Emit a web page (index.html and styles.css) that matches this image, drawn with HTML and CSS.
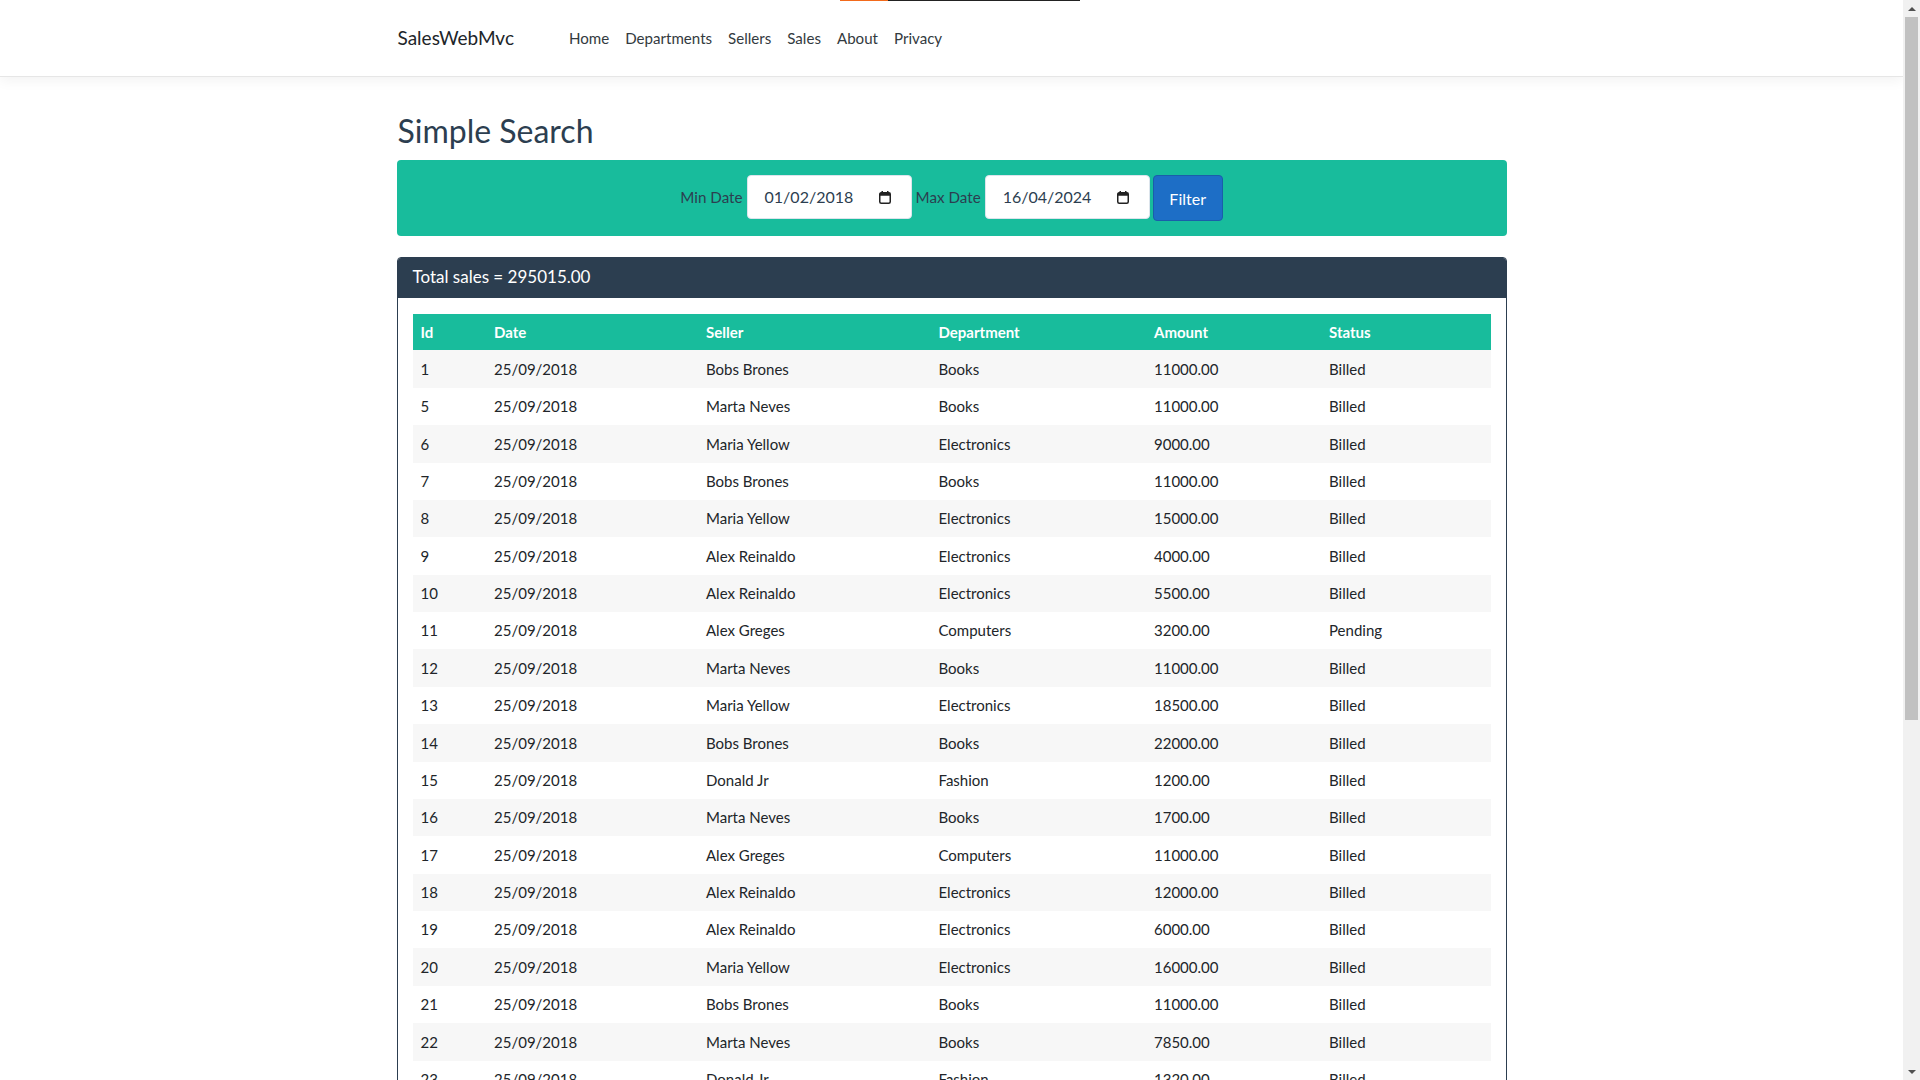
FILE: index.html
```html
<!DOCTYPE html>
<html lang="en">
<head>
<meta charset="utf-8">
<title>Simple Search - SalesWebMvc</title>
<link rel="stylesheet" href="styles.css">
</head>
<body>
<div class="page">
  <div class="loadbar"><span class="load-orange"></span><span class="load-dark"></span></div>
  <header class="navbar">
    <div class="container nav-inner">
      <a class="brand" href="#">SalesWebMvc</a>
      <ul class="nav">
        <li><a href="#">Home</a></li>
        <li><a href="#">Departments</a></li>
        <li><a href="#">Sellers</a></li>
        <li><a href="#">Sales</a></li>
        <li><a href="#">About</a></li>
        <li><a href="#">Privacy</a></li>
      </ul>
    </div>
  </header>

  <main class="container">
    <h2 class="title">Simple Search</h2>
    <form class="filter">
      <label class="flabel">Min Date</label>
      <span class="date-input"><span class="date-text">01/02/2018</span>
        <svg class="cal" width="12" height="13" viewBox="0 0 12 13"><rect x="0.75" y="1.75" width="10.5" height="10.5" rx="1.5" fill="none" stroke="#222" stroke-width="1.5"/><rect x="0.75" y="1.75" width="10.5" height="3" fill="#222"/><rect x="2.5" y="0" width="1.5" height="2.5" fill="#222"/><rect x="8" y="0" width="1.5" height="2.5" fill="#222"/></svg>
      </span>
      <label class="flabel">Max Date</label>
      <span class="date-input"><span class="date-text">16/04/2024</span>
        <svg class="cal" width="12" height="13" viewBox="0 0 12 13"><rect x="0.75" y="1.75" width="10.5" height="10.5" rx="1.5" fill="none" stroke="#222" stroke-width="1.5"/><rect x="0.75" y="1.75" width="10.5" height="3" fill="#222"/><rect x="2.5" y="0" width="1.5" height="2.5" fill="#222"/><rect x="8" y="0" width="1.5" height="2.5" fill="#222"/></svg>
      </span>
      <button class="btn-filter" type="button">Filter</button>
    </form>

    <div class="card">
      <div class="card-header">Total sales = 295015.00</div>
      <div class="card-body">
        <table class="sales">
          <colgroup>
            <col class="c-id"><col class="c-date"><col class="c-seller"><col class="c-dept"><col class="c-amount"><col class="c-status">
          </colgroup>
          <thead>
            <tr><th>Id</th><th>Date</th><th>Seller</th><th>Department</th><th>Amount</th><th>Status</th></tr>
          </thead>
          <tbody>
            <tr><td>1</td><td>25/09/2018</td><td>Bobs Brones</td><td>Books</td><td>11000.00</td><td>Billed</td></tr>
            <tr><td>5</td><td>25/09/2018</td><td>Marta Neves</td><td>Books</td><td>11000.00</td><td>Billed</td></tr>
            <tr><td>6</td><td>25/09/2018</td><td>Maria Yellow</td><td>Electronics</td><td>9000.00</td><td>Billed</td></tr>
            <tr><td>7</td><td>25/09/2018</td><td>Bobs Brones</td><td>Books</td><td>11000.00</td><td>Billed</td></tr>
            <tr><td>8</td><td>25/09/2018</td><td>Maria Yellow</td><td>Electronics</td><td>15000.00</td><td>Billed</td></tr>
            <tr><td>9</td><td>25/09/2018</td><td>Alex Reinaldo</td><td>Electronics</td><td>4000.00</td><td>Billed</td></tr>
            <tr><td>10</td><td>25/09/2018</td><td>Alex Reinaldo</td><td>Electronics</td><td>5500.00</td><td>Billed</td></tr>
            <tr><td>11</td><td>25/09/2018</td><td>Alex Greges</td><td>Computers</td><td>3200.00</td><td>Pending</td></tr>
            <tr><td>12</td><td>25/09/2018</td><td>Marta Neves</td><td>Books</td><td>11000.00</td><td>Billed</td></tr>
            <tr><td>13</td><td>25/09/2018</td><td>Maria Yellow</td><td>Electronics</td><td>18500.00</td><td>Billed</td></tr>
            <tr><td>14</td><td>25/09/2018</td><td>Bobs Brones</td><td>Books</td><td>22000.00</td><td>Billed</td></tr>
            <tr><td>15</td><td>25/09/2018</td><td>Donald Jr</td><td>Fashion</td><td>1200.00</td><td>Billed</td></tr>
            <tr><td>16</td><td>25/09/2018</td><td>Marta Neves</td><td>Books</td><td>1700.00</td><td>Billed</td></tr>
            <tr><td>17</td><td>25/09/2018</td><td>Alex Greges</td><td>Computers</td><td>11000.00</td><td>Billed</td></tr>
            <tr><td>18</td><td>25/09/2018</td><td>Alex Reinaldo</td><td>Electronics</td><td>12000.00</td><td>Billed</td></tr>
            <tr><td>19</td><td>25/09/2018</td><td>Alex Reinaldo</td><td>Electronics</td><td>6000.00</td><td>Billed</td></tr>
            <tr><td>20</td><td>25/09/2018</td><td>Maria Yellow</td><td>Electronics</td><td>16000.00</td><td>Billed</td></tr>
            <tr><td>21</td><td>25/09/2018</td><td>Bobs Brones</td><td>Books</td><td>11000.00</td><td>Billed</td></tr>
            <tr><td>22</td><td>25/09/2018</td><td>Marta Neves</td><td>Books</td><td>7850.00</td><td>Billed</td></tr>
            <tr><td>23</td><td>25/09/2018</td><td>Donald Jr</td><td>Fashion</td><td>1320.00</td><td>Billed</td></tr>
            <tr><td>24</td><td>25/09/2018</td><td>Alex Greges</td><td>Computers</td><td>1100.00</td><td>Billed</td></tr>
          </tbody>
        </table>
      </div>
    </div>
  </main>
</div>

<div class="scrollbar">
  <div class="sb-btn sb-up"><span class="tri-up"></span></div>
  <div class="sb-track"><div class="sb-thumb"></div></div>
  <div class="sb-btn sb-down"><span class="tri-down"></span></div>
</div>
</body>
</html>
```

FILE: styles.css
```css
html, body {
  margin: 0;
  padding: 0;
  height: 100%;
  overflow: hidden;
}

body {
  font-family: Lato, "Open Sans", "Liberation Sans", sans-serif;
  font-size: 15px;
  line-height: 1.5;
  color: #212529;
  background: #fff;
}

.page {
  width: 1903px;
  position: relative;
}

.container {
  width: 1140px;
  padding: 0 15px;
  margin: 0 auto;
  box-sizing: border-box;
}

/* thin loading line at the very top */
.loadbar {
  position: absolute;
  top: 0;
  left: 840px;
  display: flex;
  height: 1px;
  z-index: 5;
}
.load-orange { width: 48px; background: #f26a1b; }
.load-dark { width: 192px; background: #222; }

/* navbar */
.navbar {
  height: 76px;
  border-bottom: 1px solid #e6e6e6;
  box-shadow: 0 4px 12px rgba(0, 0, 0, 0.05);
  background: #fff;
}
.nav-inner {
  display: flex;
  align-items: center;
  height: 100%;
}
.brand {
  font-size: 19px;
  color: #212529;
  text-decoration: none;
  margin-right: 47px;
  padding-left: 1px;
  margin-top: 1px;
}
.nav {
  display: flex;
  list-style: none;
  margin: 0;
  padding: 0;
  margin-top: 1px;
}
.nav a {
  display: block;
  padding: 0 8px;
  font-size: 15.1px;
  color: #333a40;
  text-decoration: none;
}

/* title */
.title {
  font-size: 32px;
  font-weight: 400;
  line-height: 1.2;
  color: #2c3e50;
  margin: 35px 0 10px;
  padding-left: 1px;
}

/* filter bar */
.filter {
  height: 76px;
  background: #18bc9c;
  border-radius: 4px;
  display: flex;
  align-items: center;
  justify-content: center;
  gap: 4px;
  margin: 0;
}
.flabel {
  font-size: 15.2px;
  color: #2c3e50;
  margin-top: -2px;
}
.date-input {
  width: 165px;
  height: 44px;
  box-sizing: border-box;
  background: #fff;
  border: 1px solid #dce4ec;
  border-radius: 4px;
  display: flex;
  align-items: center;
  justify-content: space-between;
  padding: 0 20px 0 17px;
  margin-top: -2px;
}
.date-text {
  font-size: 16px;
  color: #2c3e50;
}
.cal { display: block; }
.btn-filter {
  width: 70px;
  height: 46px;
  box-sizing: border-box;
  background: #1d6ec6;
  border: 1px solid #1a5eaa;
  border-radius: 4px;
  color: #fff;
  font-family: inherit;
  font-size: 16px;
  padding: 0;
  margin-left: -1px;
}

/* card */
.card {
  margin-top: 21px;
  border: 1px solid #2c3e50;
  border-radius: 4px;
  overflow: hidden;
}
.card-header {
  background: #2c3e50;
  color: #fff;
  font-size: 17px;
  line-height: 25px;
  padding: 6px 15px 9px;
}
.card-body {
  padding: 16px 15px;
}

.sales {
  width: 100%;
  border-collapse: collapse;
  table-layout: fixed;
}
.c-id { width: 73.5px; }
.c-date { width: 212px; }
.c-seller { width: 232.5px; }
.c-dept { width: 215.5px; }
.c-amount { width: 175px; }
.c-status { width: auto; }

.sales th {
  background: #18bc9c;
  color: #fff;
  font-weight: 700;
  text-align: left;
  padding: 7px 8px;
  line-height: 22px;
}
.sales td {
  padding: 7.45px 8px;
  line-height: 22.5px;
  color: #212529;
}
.sales tbody tr:nth-child(odd) td {
  background: #f7f7f7;
}

/* fake classic scrollbar */
.scrollbar {
  position: fixed;
  top: 0;
  right: 0;
  width: 17px;
  height: 100vh;
  background: #f1f1f1;
  display: flex;
  flex-direction: column;
}
.sb-btn {
  height: 17px;
  display: flex;
  align-items: center;
  justify-content: center;
}
.sb-track {
  flex: 1;
  position: relative;
}
.sb-thumb {
  position: absolute;
  top: 0;
  left: 2px;
  width: 13px;
  height: 703px;
  background: #c1c1c1;
}
.tri-up {
  width: 0;
  height: 0;
  border-left: 4px solid transparent;
  border-right: 4px solid transparent;
  border-bottom: 4px solid #505050;
}
.tri-down {
  width: 0;
  height: 0;
  border-left: 4px solid transparent;
  border-right: 4px solid transparent;
  border-top: 4px solid #505050;
}
```
